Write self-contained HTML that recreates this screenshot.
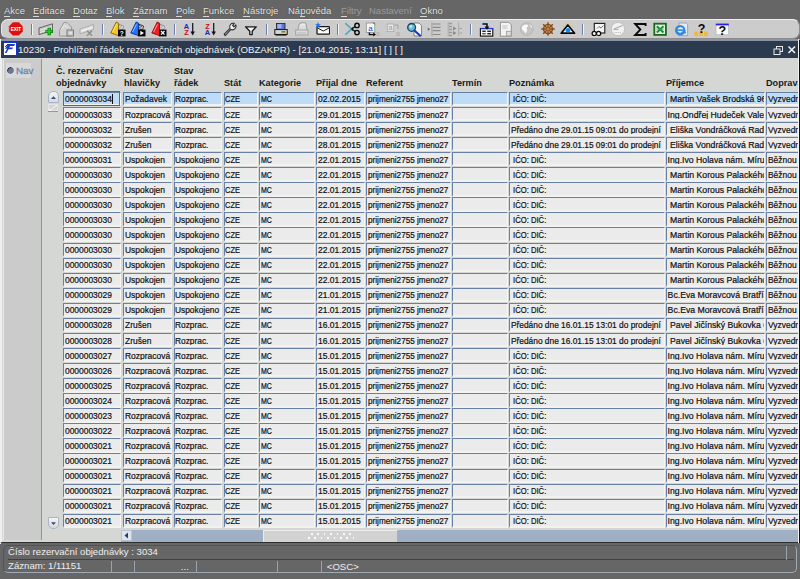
<!DOCTYPE html>
<html><head><meta charset="utf-8"><style>
*{margin:0;padding:0;box-sizing:border-box}
html,body{width:800px;height:579px;overflow:hidden}
body{position:relative;background:#666666;font-family:"Liberation Sans",sans-serif;color:#000}
#menu span{position:absolute;top:4.5px;font-size:9.5px;line-height:11px;color:#e6e6e6;white-space:nowrap;text-shadow:0 0 1px #333}
#menu span.dis{color:#9a9a9a;text-shadow:none}
#menu u{text-decoration:none;border-bottom:1px solid #d8d8d8}
#tb{position:absolute;left:1px;top:19px;width:799px;height:20px;background:#cccccc;border:1px solid #8c8c8c;border-top-color:#eeeeee;border-left-color:#e8e8e8;border-radius:7px}
#tbline{position:absolute;left:0;top:39px;width:800px;height:2px;background:#8a94a4}
.ic{position:absolute}
.sep{position:absolute;top:23.5px;width:2px;height:11px;background:#6a80aa;border-right:1px solid #f4f4f4}
#title{position:absolute;left:1.2px;top:41px;width:796.5px;height:17.5px;background:#2b3a4f}
#title .t{position:absolute;left:16.8px;top:3px;font-size:9.7px;line-height:11px;color:#f0f0f0;white-space:nowrap}
#ticon{position:absolute;left:2.5px;top:42px;width:14px;height:13.5px;background:#fff;border:1.2px solid #1830d0}
#win{position:absolute;left:0px;top:58px;width:800px;height:485px;background:#d5d7d5;border-right:1.2px solid #101010;border-bottom:1.5px solid #303030;border-left:2px solid #f0f0f0}
#nav{position:absolute;left:2.5px;top:59px;width:39.5px;height:481px;background:#cbcbcb;border-right:1px solid #8296b8;border-left:1px solid #e8e8e8}
#navbtn{position:absolute;left:5.5px;top:63px;width:25.5px;height:15px;background:#d8d8d8}
#navbtn .t{position:absolute;left:10.5px;top:2px;font-size:9.8px;line-height:11px;color:#6a84b0;-webkit-text-stroke:0.3px #6a84b0}
#navbtn .c{position:absolute;left:0px;top:2.5px;width:9.5px;height:9.5px;border-radius:50%;background:#6a7890;border:1.3px solid #f4f4f4;box-shadow:inset 1px 1px 0 #2a3448}
.h{position:absolute;font-size:9.9px;font-weight:bold;color:#1a1a1a;white-space:nowrap;line-height:11.85px;transform:scaleX(0.925);transform-origin:0 0}
.f{position:absolute;height:14.4px;background:#ebebeb;border-top:1.5px solid #6880a4;border-left:1.5px solid #6880a4;border-bottom:2.4px solid #f2f2f0;border-right:1px solid #f6f6f4;overflow:hidden;white-space:nowrap}
.f span{position:absolute;left:0.6px;top:0.65px;font-size:8.7px;color:#101010;line-height:12px;-webkit-text-stroke:0.2px #101010;transform:scaleX(0.83);transform-origin:0 0}
.f.sel{background:#bcdcf8}
#redbox{position:absolute;left:62.6px;top:91.1px;width:57.8px;height:15.4px;border:1.1px solid #e43030}
#caret{position:absolute;left:112.3px;top:94px;width:1px;height:10px;background:#111}
#sbar{position:absolute;left:121px;top:530px;width:676.5px;height:12px;background:#9fb0c4}
#sbtn{position:absolute;left:121px;top:530px;width:11px;height:11px;background:#dde4ec;border:1px solid #b8c4d4}
#sthumb{position:absolute;left:263px;top:530px;width:135px;height:11.5px;background:#d2d2d2;border-right:1px solid #a8aeb8;border-top:1px solid #ececec;border-left:1px solid #ececec}
.arr{position:absolute;left:47.5px;width:11px;height:11.5px;background:linear-gradient(#f4f4f4,#d8dade);border:1px solid #a8b4c8}
#status{position:absolute;left:2.8px;top:544.7px;width:794.5px;height:28.7px;border:1px solid #4c5464;border-right-color:#a0aab6;border-bottom-color:#a0aab6;border-radius:5px}
#status .t{position:absolute;font-size:9.6px;line-height:11px;color:#eeeeee;white-space:nowrap}
.vs{position:absolute;width:1px;background:#3c4450;border-left:1px solid #9aa2ae}
</style></head><body>
<div id="menu"><span class="" style="left:4px"><u>A</u>kce</span>
<span class="" style="left:33px"><u>E</u>ditace</span>
<span class="" style="left:73px"><u>D</u>otaz</span>
<span class="" style="left:106px"><u>B</u>lok</span>
<span class="" style="left:133px"><u>Z</u>áznam</span>
<span class="" style="left:176px"><u>P</u>ole</span>
<span class="" style="left:203px"><u>F</u>unkce</span>
<span class="" style="left:243px"><u>N</u>ástroje</span>
<span class="" style="left:288px">Ná<u>p</u>ověda</span>
<span class="dis" style="left:341px"><u>F</u>iltry</span>
<span class="dis" style="left:369px">Nastavení</span>
<span class="" style="left:420px"><u>O</u>kno</span></div>
<div id="tbline"></div><div style="position:absolute;left:0;top:38.5px;width:1.2px;height:505px;background:#f0f0f0"></div><div style="position:absolute;z-index:5;left:797.9px;top:39px;width:1px;height:504px;background:#f4f4f4"></div><div style="position:absolute;z-index:5;left:798.9px;top:40px;width:1.1px;height:503px;background:#101010"></div><div id="tb"></div>
<div class="sep" style="left:30.5px"></div>
<div class="sep" style="left:101.5px"></div>
<div class="sep" style="left:173.5px"></div>
<div class="sep" style="left:265.5px"></div>
<div class="sep" style="left:337.0px"></div>
<div class="sep" style="left:469.5px"></div>
<div class="sep" style="left:582.0px"></div>
<svg class="ic" style="left:8px;top:21px" width="16" height="16" viewBox="0 0 16 16"><polygon points="4.8,1 10.8,1 15,5.2 15,10.6 10.8,14.8 4.8,14.8 0.8,10.6 0.8,5.2" fill="#dc1010" stroke="#f0c8c8" stroke-width="0.5"/><text x="7.9" y="10" font-size="5" font-weight="bold" textLength="10.5" lengthAdjust="spacingAndGlyphs" fill="#fff" text-anchor="middle" font-family="Liberation Sans">EXIT</text></svg><svg class="ic" style="left:38px;top:21px" width="16" height="16" viewBox="0 0 16 16"><path d="M1,7 L14.5,2.8 L14.5,9.5 L1,13.6 Z" fill="#c4c4c4" stroke="#5a5a5a" stroke-width="0.9"/><path d="M2,9.2 L13.5,5.6 M2,11.5 L13.5,7.9" stroke="#f0f0f0" stroke-width="0.9"/><path d="M11.2,6.8 v7.4 M7.5,10.5 h7.4" stroke="#0a5a0a" stroke-width="3.2"/><path d="M11.2,7.3 v6.4 M8,10.5 h6.4" stroke="#18d018" stroke-width="2"/></svg><svg class="ic" style="left:58px;top:21px" width="16" height="16" viewBox="0 0 16 16"><path d="M1.5,9.5 L6,1.5 L9,1.5 L13.5,6 L13.5,15 L1.5,15 Z" fill="#d2d2d2" stroke="#9a9a9a" stroke-width="1"/><path d="M3.5,8 l3,-4 3,3" stroke="#eee" fill="none"/><rect x="9" y="9" width="6.5" height="6" fill="#c8c8c8" stroke="#7a7a7a" stroke-width="1"/><path d="M13.5,10.5 L10.5,12 L13.5,13.5 Z" fill="#f0f0f0"/></svg><svg class="ic" style="left:79px;top:21px" width="16" height="16" viewBox="0 0 16 16"><path d="M1,8 L14.5,3.6 L14.5,8.5 L1,12.8 Z" fill="#dedede" stroke="#a8a8a8" stroke-width="0.9"/><path d="M2,10.2 L13.5,6.5" stroke="#f6f6f6"/><path d="M8,9.8 l5,5 M13,9.8 l-5,5" stroke="#909090" stroke-width="1.5"/></svg><svg class="ic" style="left:109.5px;top:21px" width="16" height="16" viewBox="0 0 16 16"><path d="M7,2.5 L13.5,5 L12.5,9 L6,7 Z" fill="#e8e8e8" stroke="#8a8a8a" stroke-width="0.9"/><path d="M8,4 l4,1.6 M7.6,5.6 l4,1.6" stroke="#8a8a8a" stroke-width="0.7"/><polygon points="0.8,12 6.2,1 8.6,2.2 8.4,9 9,14.8" fill="#f4c818" stroke="#906010" stroke-width="0.9"/><path d="M2.6,11 L6.4,3.4" stroke="#fff" stroke-opacity="0.55" stroke-width="1"/><rect x="8" y="8.6" width="7.5" height="6.8" fill="#080808"/><text x="11.8" y="14.6" font-size="6.5" font-weight="bold" fill="#fff" text-anchor="middle" font-family="Liberation Sans">?</text></svg><svg class="ic" style="left:130px;top:21px" width="16" height="16" viewBox="0 0 16 16"><path d="M7,2.5 L13.5,5 L12.5,9 L6,7 Z" fill="#e8e8e8" stroke="#222" stroke-width="0.9"/><path d="M8,4 l4,1.6 M7.6,5.6 l4,1.6" stroke="#222" stroke-width="0.7"/><polygon points="0.8,12 6.2,1 8.6,2.2 8.4,9 9,14.8" fill="#1c78f8" stroke="#0830a0" stroke-width="0.9"/><path d="M2.6,11 L6.4,3.4" stroke="#fff" stroke-opacity="0.55" stroke-width="1"/><rect x="8" y="8.6" width="7.5" height="6.8" fill="#080808"/><path d="M10.3,9.8 L14,12 L10.3,14.2 Z" fill="#fff"/></svg><svg class="ic" style="left:150.8px;top:21px" width="16" height="16" viewBox="0 0 16 16"><path d="M7,2.5 L13.5,5 L12.5,9 L6,7 Z" fill="#e8e8e8" stroke="#8a8a8a" stroke-width="0.9"/><path d="M8,4 l4,1.6 M7.6,5.6 l4,1.6" stroke="#8a8a8a" stroke-width="0.7"/><polygon points="0.8,12 6.2,1 8.6,2.2 8.4,9 9,14.8" fill="#ee2020" stroke="#901010" stroke-width="0.9"/><path d="M2.6,11 L6.4,3.4" stroke="#fff" stroke-opacity="0.55" stroke-width="1"/><rect x="8" y="8.6" width="7.5" height="6.8" fill="#080808"/><path d="M10,10 l3.5,3.6 M13.5,10 l-3.5,3.6" stroke="#fff" stroke-width="1.3"/></svg><svg class="ic" style="left:182px;top:21px" width="16" height="16" viewBox="0 0 16 16"><text x="4.4" y="7.6" font-size="7.4" font-weight="bold" fill="#1a2ab8" text-anchor="middle" font-family="Liberation Sans">A</text><text x="4.4" y="13.9" font-size="7.4" font-weight="bold" fill="#c01010" text-anchor="middle" font-family="Liberation Sans">Z</text><path d="M10.7,2 v10" stroke="#111" stroke-width="1.2"/><path d="M8.5,10.5 L10.7,14.5 L12.9,10.5 Z" fill="#111"/></svg><svg class="ic" style="left:203px;top:21px" width="16" height="16" viewBox="0 0 16 16"><text x="4.4" y="7.6" font-size="7.4" font-weight="bold" fill="#c01010" text-anchor="middle" font-family="Liberation Sans">Z</text><text x="4.4" y="13.9" font-size="7.4" font-weight="bold" fill="#1a2ab8" text-anchor="middle" font-family="Liberation Sans">A</text><path d="M10.7,2 v10" stroke="#111" stroke-width="1.2"/><path d="M8.5,10.5 L10.7,14.5 L12.9,10.5 Z" fill="#111"/></svg><svg class="ic" style="left:222px;top:21px" width="16" height="16" viewBox="0 0 16 16"><path d="M2.2,13.2 L8,7.4 A3.6,3.6 0 0 1 12.3,2.4 L10.6,4.4 L11.9,5.8 L13.9,4 A3.6,3.6 0 0 1 8.9,8.4 L3.2,14.6 Z" fill="#f4f4f4" stroke="#2a2a2a" stroke-width="1.1" stroke-linejoin="round"/></svg><svg class="ic" style="left:243px;top:21px" width="16" height="16" viewBox="0 0 16 16"><path d="M2.5,5.8 L13.3,5.8 L9.2,10.2 L9.2,13.6 L6.8,13.6 L6.8,10.2 Z" fill="#f6f6f6" stroke="#181818" stroke-width="1.3" stroke-linejoin="round"/></svg><svg class="ic" style="left:273px;top:21px" width="16" height="16" viewBox="0 0 16 16"><rect x="3.5" y="2.4" width="8.5" height="6.5" fill="#5a78d0" stroke="#202020" stroke-width="0.8"/><rect x="4.5" y="3.2" width="4" height="4" fill="#a8b8f0"/><rect x="1.8" y="8.6" width="12.4" height="4.8" fill="#d8d8d8" stroke="#181818" stroke-width="1"/><rect x="2.5" y="13" width="11" height="1.6" fill="#181818"/><rect x="8.4" y="10" width="1.6" height="1.6" fill="#20c020"/><rect x="10.2" y="10" width="1.6" height="1.6" fill="#e02020"/><rect x="12" y="10" width="1.4" height="1.6" fill="#e0c020"/></svg><svg class="ic" style="left:294px;top:21px" width="16" height="16" viewBox="0 0 16 16"><path d="M4,9 L5,3 Q8,0.5 12,2 L13,9" fill="#dcdcdc" stroke="#a0a0a0" stroke-width="1"/><path d="M6,5 q2,-2 5,-1" stroke="#f4f4f4" fill="none"/><rect x="1.6" y="9" width="12.4" height="5" fill="#dadada" stroke="#a4a4a4" stroke-width="1"/><path d="M3,12 h9" stroke="#b8b8b8"/></svg><svg class="ic" style="left:314px;top:21px" width="16" height="16" viewBox="0 0 16 16"><rect x="3" y="5.6" width="12.6" height="7.6" rx="0.8" fill="#fafafa" stroke="#1a1a1a" stroke-width="1.3"/><path d="M3.5,7 L9.3,10 L15,7" fill="none" stroke="#1a1a1a" stroke-width="1"/><path d="M4,1 L4.8,3.2 L7,3.2 L5.2,4.6 L5.9,6.8 L4,5.4 L2.1,6.8 L2.8,4.6 L1,3.2 L3.2,3.2 Z" fill="#1070f0"/></svg><svg class="ic" style="left:344px;top:21px" width="16" height="16" viewBox="0 0 16 16"><path d="M1.3,2.2 L9.5,9.8" stroke="#60a8c0" stroke-width="1.8"/><path d="M1.3,13.8 L9.5,6.2" stroke="#60a8c0" stroke-width="1.8"/><circle cx="13" cy="4.4" r="2.2" fill="none" stroke="#0a0a0a" stroke-width="1.4"/><circle cx="13" cy="11.6" r="2.2" fill="none" stroke="#0a0a0a" stroke-width="1.4"/><path d="M7.5,8 L11.3,5.5 M7.5,8 L11.3,10.5" stroke="#0a0a0a" stroke-width="1.4"/></svg><svg class="ic" style="left:365px;top:21px" width="16" height="16" viewBox="0 0 16 16"><rect x="1.3" y="2" width="8.5" height="9.6" fill="#f6f6f6" stroke="#909090" stroke-width="0.8"/><path d="M8,1.5 l1.8,1.8" stroke="#333" stroke-width="0.8"/><text x="5.4" y="9.6" font-size="8" fill="#1840f0" text-anchor="middle" font-family="Liberation Sans">a</text><path d="M4.4,11.4 v2.2 h4" stroke="#0a0a0a" stroke-width="1.4" fill="none"/><path d="M8.2,11.6 L11,13.6 L8.2,15.6 Z" fill="#0a0a0a"/><text x="13" y="14.6" font-size="6.8" fill="#a8a8a8" text-anchor="middle" font-family="Liberation Sans">a</text></svg><svg class="ic" style="left:386px;top:21px" width="16" height="16" viewBox="0 0 16 16"><rect x="1.3" y="3" width="6.5" height="7.6" fill="#e6e6e6" stroke="#a8a8a8" stroke-width="0.8"/><text x="4.5" y="9.4" font-size="7" fill="#9a9a9a" text-anchor="middle" font-family="Liberation Sans">a</text><path d="M8.4,4 h3.6 v4" stroke="#a0a0a0" stroke-width="1" fill="none"/><text x="11.8" y="15" font-size="7.5" fill="#a8a8a8" text-anchor="middle" font-family="Liberation Sans">a</text></svg><svg class="ic" style="left:406px;top:21px" width="16" height="16" viewBox="0 0 16 16"><path d="M8,2 h5 l2.5,2.5 v10.5 h-7.5 z" fill="#f4f4f4" stroke="#6a6a6a" stroke-width="0.8"/><circle cx="5.6" cy="6.4" r="3.9" fill="#68c0c8" stroke="#18406a" stroke-width="1.3"/><circle cx="4.8" cy="5.6" r="1.4" fill="#c8f0f0"/><path d="M8.4,9.4 L14,14.6" stroke="#1038c8" stroke-width="2.1" stroke-linecap="round"/></svg><svg class="ic" style="left:426px;top:21px" width="16" height="16" viewBox="0 0 16 16"><path d="M1.7,6.6 L4.3,8.2 L1.7,9.8 Z" fill="#707070"/><path d="M6,1.2 v14" stroke="#9a9a9a" stroke-width="1"/><path d="M7,3 h7.5 M7,6.3 h7.5 M7,9.7 h7.5 M7,13.5 h7.5" stroke="#8a8a8a" stroke-width="1.2"/></svg><svg class="ic" style="left:447px;top:21px" width="16" height="16" viewBox="0 0 16 16"><path d="M1.2,1.2 v14 M11.7,1.2 v14" stroke="#a8a8a8" stroke-width="1"/><path d="M2,2.5 h3 M2,5.5 h3 M2,8.5 h3 M2,11.5 h3 M2,14.5 h3" stroke="#9a9a9a" stroke-width="1.3"/><path d="M6,5.5 L9.5,7.5 L6,9.5 Z M6,10 L9.5,12 L6,14 Z" fill="#8a8a8a"/><path d="M12.5,7.5 h2.5 M12.5,12 h2.5" stroke="#a0a0a0"/></svg><svg class="ic" style="left:478px;top:21px" width="16" height="16" viewBox="0 0 16 16"><path d="M2,1 h10" stroke="#a8d0f0" stroke-width="1"/><rect x="2.4" y="7.5" width="12.4" height="7.6" fill="#f4f4f4" stroke="#0a0a0a" stroke-width="1.1"/><path d="M2.4,7.6 h12.4" stroke="#1a3ad8" stroke-width="1.2"/><rect x="4.3" y="9.6" width="3.4" height="1.4" fill="#222"/><rect x="9.3" y="9.6" width="3.6" height="1.4" fill="#222"/><rect x="4.3" y="12" width="3.4" height="1.4" fill="#555"/><rect x="9.3" y="12" width="3.6" height="1.4" fill="#222"/><path d="M4.5,3 h4.5 v3.5" stroke="#0a0a0a" stroke-width="1.5" fill="none"/><path d="M6.6,5.4 L9,8.8 L11.4,5.4 Z" fill="#0a0a0a"/></svg><svg class="ic" style="left:498px;top:21px" width="16" height="16" viewBox="0 0 16 16"><path d="M2.4,1.3 h8.4 l2.5,2.5 v11.4 h-10.9 z" fill="#f2f2f2" stroke="#8a8a8a" stroke-width="0.9"/><path d="M4.4,5 h5 M4.4,7 h5" stroke="#c0c0c0"/><rect x="8.5" y="10.3" width="4.6" height="4.6" fill="#dedede" stroke="#9a9a9a" stroke-width="0.8"/></svg><svg class="ic" style="left:519px;top:21px" width="16" height="16" viewBox="0 0 16 16"><circle cx="7.8" cy="8" r="6.4" fill="#c4c4c4" stroke="#a8a8a8" stroke-width="0.6"/><path d="M3,5.5 q2.5,-2.8 6,-1.5 q0.8,1.8 -1.5,2.5 q1.5,3 -1,6 q-1,-2.5 -3,-3.5 q-1.2,-1.5 -0.5,-3.5z M10.5,3.2 q2.5,1 3,3.5 q-1.6,0.2 -2.2,-1.6z" fill="#f8f8f8"/></svg><svg class="ic" style="left:539.5px;top:21px" width="16" height="16" viewBox="0 0 16 16"><circle cx="8" cy="8" r="4.4" fill="none" stroke="#8a4a10" stroke-width="1.5"/><path d="M8,1.2 v13.6 M1.2,8 h13.6 M3.2,3.2 l9.6,9.6 M12.8,3.2 l-9.6,9.6" stroke="#8a4a10" stroke-width="1.4"/><circle cx="8" cy="8" r="1.6" fill="#d08040"/></svg><svg class="ic" style="left:560px;top:21px" width="16" height="16" viewBox="0 0 16 16"><path d="M1.2,12.2 L7.8,4 L14.6,12.2 Z" fill="#f2f2f2" stroke="#0a0a0a" stroke-width="1.7" stroke-linejoin="round"/><circle cx="8" cy="9.2" r="2.3" fill="#1088f8"/><path d="M2.2,4.5 l2,1.2 M13.4,4.5 l-2,1.2 M5,2.4 l1,1.2 M10.6,2.4 l-1,1.2 M7.9,1.4 v1.4" stroke="#e8c818" stroke-width="1"/></svg><svg class="ic" style="left:591px;top:21px" width="16" height="16" viewBox="0 0 16 16"><rect x="3.3" y="2.4" width="10.5" height="9.6" fill="#f4f4f4" stroke="#1a1a1a" stroke-width="1.1"/><path d="M6,7.5 l2,-2 l2,1.5 l2.5,-2.5" stroke="#555" fill="none" stroke-width="0.8"/><circle cx="3.2" cy="12.4" r="2.1" fill="#f4f4f4" stroke="#0a0a0a" stroke-width="1.2"/><circle cx="7.6" cy="12.4" r="2.1" fill="#f4f4f4" stroke="#0a0a0a" stroke-width="1.2"/></svg><svg class="ic" style="left:610px;top:21px" width="16" height="16" viewBox="0 0 16 16"><circle cx="8" cy="8" r="6.6" fill="#f2f2f2" stroke="#c0c0c0" stroke-width="0.9"/><path d="M4,8 L12.5,4.5" stroke="#a8a8a8" stroke-width="1.1"/><path d="M3.5,8.5 h5" stroke="#b0b0b0" stroke-width="1"/><path d="M4.5,11.5 h7" stroke="#b8b8b8" stroke-width="1" stroke-dasharray="1,0.8"/></svg><svg class="ic" style="left:632px;top:21px" width="16" height="16" viewBox="0 0 16 16"><path d="M13.6,5 L13.6,3 L3.2,3 L8.3,8.6 L3.2,14 L13.6,14 L13.6,12" fill="none" stroke="#0a0a0a" stroke-width="1.9"/></svg><svg class="ic" style="left:652px;top:21px" width="16" height="16" viewBox="0 0 16 16"><rect x="2.3" y="2.7" width="11.6" height="11.2" fill="#e0efe0" stroke="#1a6a1a" stroke-width="1.8"/><path d="M4.8,5.2 L11.5,11.5 M11.5,5.2 L4.8,11.5" stroke="#1a8a3a" stroke-width="1.9"/><path d="M4,8.3 h8" stroke="#60a860" stroke-width="0.6"/></svg><svg class="ic" style="left:673px;top:21px" width="16" height="16" viewBox="0 0 16 16"><path d="M6,2 h7 l1.6,1.6 v11 h-8.6 z" fill="#e4eaf4" stroke="#8a98b8" stroke-width="0.8"/><circle cx="7.2" cy="9.2" r="5.2" fill="#3088e0"/><circle cx="7.4" cy="9" r="2.8" fill="#e8f2fa"/><rect x="4.4" y="8.3" width="6" height="1.6" fill="#3088e0"/><path d="M8.5,10.5 h4.4 v2 h-4.4z" fill="#3088e0"/></svg><svg class="ic" style="left:693px;top:21px" width="16" height="16" viewBox="0 0 16 16"><rect x="1.3" y="10.6" width="3.8" height="4.6" fill="#f0b840"/><rect x="6.2" y="10.6" width="3.8" height="4.6" fill="#f0b840"/><rect x="11.1" y="10.6" width="3.8" height="4.6" fill="#f0b840"/><text x="8.6" y="11.8" font-size="12.5" font-weight="bold" fill="#080808" text-anchor="middle" font-family="Liberation Sans">?</text></svg><svg class="ic" style="left:714px;top:21px" width="16" height="16" viewBox="0 0 16 16"><rect x="2" y="3.2" width="12.6" height="10.6" fill="#fafafa" stroke="#aaa" stroke-width="0.6"/><rect x="1.8" y="2.6" width="13" height="1.8" fill="#2a20e8"/><text x="8.2" y="14.2" font-size="12.5" font-weight="bold" fill="#080808" text-anchor="middle" font-family="Liberation Sans">?</text></svg>
<div id="title"><div class="t">10230 - Prohlížení řádek rezervačních objednávek (OBZAKPR) - [21.04.2015; 13:11] [ ] [ ]</div>
<svg style="position:absolute;left:771.5px;top:4px" width="24" height="11" viewBox="0 0 24 11"><rect x="3.5" y="1.5" width="6" height="5" fill="none" stroke="#e8e8e8" stroke-width="1"/><rect x="1" y="4" width="6" height="5.5" fill="#2b3a4f" stroke="#e8e8e8" stroke-width="1"/><path d="M15.5,1.5 L22,8 M22,1.5 L15.5,8" stroke="#f0f0f0" stroke-width="1.6"/></svg>
</div>
<div id="ticon"><svg width="12" height="11" viewBox="0 0 12 11" style="position:absolute;left:0;top:0"><path d="M1,6 L4,1 L11,1 L10,3 L6,3 L5.3,4.5 L9,4.5 L8.2,6.2 L4.5,6.2 L2.5,10 L0.8,10 L3.2,5.5 Z" fill="#1838c8"/><path d="M1,4 l3,-3" stroke="#1838c8" stroke-width="1"/></svg></div>
<div id="win"></div>
<div id="nav"></div>
<div id="navbtn"><div class="c"></div><div class="t">Nav</div></div>
<div class="h" style="left:56px;top:64.9px">Č. rezervační<br>objednávky</div>
<div class="h" style="left:123.5px;top:64.9px">Stav<br>hlavičky</div>
<div class="h" style="left:173.5px;top:64.9px">Stav<br>řádek</div>
<div class="h" style="left:223.5px;top:76.75px">Stát</div>
<div class="h" style="left:259px;top:76.75px">Kategorie</div>
<div class="h" style="left:316px;top:76.75px">Přijal dne</div>
<div class="h" style="left:366px;top:76.75px">Referent</div>
<div class="h" style="left:452px;top:76.75px">Termín</div>
<div class="h" style="left:509px;top:76.75px">Poznámka</div>
<div class="h" style="left:666px;top:76.75px">Příjemce</div>
<div class="h" style="left:766px;top:76.75px">Doprava</div>
<div class="f sel" style="left:63px;top:91.80px;width:57.5px"><span style="transform:scaleX(0.97)">0000003034</span></div>
<div class="f sel" style="left:123px;top:91.80px;width:49.0px"><span style="transform:scaleX(0.975)">Požadavek</span></div>
<div class="f sel" style="left:173.5px;top:91.80px;width:48.5px"><span style="transform:scaleX(0.96)">Rozprac.</span></div>
<div class="f sel" style="left:223.5px;top:91.80px;width:34.0px"><span style="transform:scaleX(0.86)">CZE</span></div>
<div class="f sel" style="left:259px;top:91.80px;width:56.0px"><span style="transform:scaleX(0.81)">MC</span></div>
<div class="f sel" style="left:316px;top:91.80px;width:48.5px"><span style="transform:scaleX(0.98)">02.02.2015</span></div>
<div class="f sel" style="left:366px;top:91.80px;width:84.5px"><span style="transform:scaleX(0.94)">prijmeni2755 jmeno27</span></div>
<div class="f sel" style="left:452px;top:91.80px;width:55.5px"><span style="transform:scaleX(0.97)"></span></div>
<div class="f sel" style="left:509px;top:91.80px;width:155.5px"><span style="transform:scaleX(0.88)">&nbsp;IČO: DIČ:</span></div>
<div class="f sel" style="left:666px;top:91.80px;width:98.5px"><span style="transform:scaleX(1.0)">&nbsp;Martin Vašek Brodská 96</span></div>
<div class="f sel" style="left:766px;top:91.80px;width:35.0px"><span style="transform:scaleX(0.97)">Vyzvednutí</span></div>
<div class="f" style="left:63px;top:106.87px;width:57.5px"><span style="transform:scaleX(0.97)">0000003033</span></div>
<div class="f" style="left:123px;top:106.87px;width:49.0px"><span style="transform:scaleX(0.975)">Rozpracová</span></div>
<div class="f" style="left:173.5px;top:106.87px;width:48.5px"><span style="transform:scaleX(0.96)">Rozprac.</span></div>
<div class="f" style="left:223.5px;top:106.87px;width:34.0px"><span style="transform:scaleX(0.86)">CZE</span></div>
<div class="f" style="left:259px;top:106.87px;width:56.0px"><span style="transform:scaleX(0.81)">MC</span></div>
<div class="f" style="left:316px;top:106.87px;width:48.5px"><span style="transform:scaleX(0.98)">29.01.2015</span></div>
<div class="f" style="left:366px;top:106.87px;width:84.5px"><span style="transform:scaleX(0.94)">prijmeni2755 jmeno27</span></div>
<div class="f" style="left:452px;top:106.87px;width:55.5px"><span style="transform:scaleX(0.97)"></span></div>
<div class="f" style="left:509px;top:106.87px;width:155.5px"><span style="transform:scaleX(0.88)">&nbsp;IČO: DIČ:</span></div>
<div class="f" style="left:666px;top:106.87px;width:98.5px"><span style="transform:scaleX(1.0)">Ing.Ondřej Hudeček Valeriánova</span></div>
<div class="f" style="left:766px;top:106.87px;width:35.0px"><span style="transform:scaleX(0.97)">Vyzvednutí</span></div>
<div class="f" style="left:63px;top:121.94px;width:57.5px"><span style="transform:scaleX(0.97)">0000003032</span></div>
<div class="f" style="left:123px;top:121.94px;width:49.0px"><span style="transform:scaleX(0.975)">Zrušen</span></div>
<div class="f" style="left:173.5px;top:121.94px;width:48.5px"><span style="transform:scaleX(0.96)">Rozprac.</span></div>
<div class="f" style="left:223.5px;top:121.94px;width:34.0px"><span style="transform:scaleX(0.86)">CZE</span></div>
<div class="f" style="left:259px;top:121.94px;width:56.0px"><span style="transform:scaleX(0.81)">MC</span></div>
<div class="f" style="left:316px;top:121.94px;width:48.5px"><span style="transform:scaleX(0.98)">28.01.2015</span></div>
<div class="f" style="left:366px;top:121.94px;width:84.5px"><span style="transform:scaleX(0.94)">prijmeni2755 jmeno27</span></div>
<div class="f" style="left:452px;top:121.94px;width:55.5px"><span style="transform:scaleX(0.97)"></span></div>
<div class="f" style="left:509px;top:121.94px;width:155.5px"><span style="transform:scaleX(0.96)">Předáno dne 29.01.15 09:01 do prodejní</span></div>
<div class="f" style="left:666px;top:121.94px;width:98.5px"><span style="transform:scaleX(1.0)">&nbsp;Eliška Vondráčková Radlická</span></div>
<div class="f" style="left:766px;top:121.94px;width:35.0px"><span style="transform:scaleX(0.97)">Vyzvednutí</span></div>
<div class="f" style="left:63px;top:137.01px;width:57.5px"><span style="transform:scaleX(0.97)">0000003032</span></div>
<div class="f" style="left:123px;top:137.01px;width:49.0px"><span style="transform:scaleX(0.975)">Zrušen</span></div>
<div class="f" style="left:173.5px;top:137.01px;width:48.5px"><span style="transform:scaleX(0.96)">Rozprac.</span></div>
<div class="f" style="left:223.5px;top:137.01px;width:34.0px"><span style="transform:scaleX(0.86)">CZE</span></div>
<div class="f" style="left:259px;top:137.01px;width:56.0px"><span style="transform:scaleX(0.81)">MC</span></div>
<div class="f" style="left:316px;top:137.01px;width:48.5px"><span style="transform:scaleX(0.98)">28.01.2015</span></div>
<div class="f" style="left:366px;top:137.01px;width:84.5px"><span style="transform:scaleX(0.94)">prijmeni2755 jmeno27</span></div>
<div class="f" style="left:452px;top:137.01px;width:55.5px"><span style="transform:scaleX(0.97)"></span></div>
<div class="f" style="left:509px;top:137.01px;width:155.5px"><span style="transform:scaleX(0.96)">Předáno dne 29.01.15 09:01 do prodejní</span></div>
<div class="f" style="left:666px;top:137.01px;width:98.5px"><span style="transform:scaleX(1.0)">&nbsp;Eliška Vondráčková Radlická</span></div>
<div class="f" style="left:766px;top:137.01px;width:35.0px"><span style="transform:scaleX(0.97)">Vyzvednutí</span></div>
<div class="f" style="left:63px;top:152.08px;width:57.5px"><span style="transform:scaleX(0.97)">0000003031</span></div>
<div class="f" style="left:123px;top:152.08px;width:49.0px"><span style="transform:scaleX(0.975)">Uspokojen</span></div>
<div class="f" style="left:173.5px;top:152.08px;width:48.5px"><span style="transform:scaleX(0.96)">Uspokojeno</span></div>
<div class="f" style="left:223.5px;top:152.08px;width:34.0px"><span style="transform:scaleX(0.86)">CZE</span></div>
<div class="f" style="left:259px;top:152.08px;width:56.0px"><span style="transform:scaleX(0.81)">MC</span></div>
<div class="f" style="left:316px;top:152.08px;width:48.5px"><span style="transform:scaleX(0.98)">22.01.2015</span></div>
<div class="f" style="left:366px;top:152.08px;width:84.5px"><span style="transform:scaleX(0.94)">prijmeni2755 jmeno27</span></div>
<div class="f" style="left:452px;top:152.08px;width:55.5px"><span style="transform:scaleX(0.97)"></span></div>
<div class="f" style="left:509px;top:152.08px;width:155.5px"><span style="transform:scaleX(0.88)">&nbsp;IČO: DIČ:</span></div>
<div class="f" style="left:666px;top:152.08px;width:98.5px"><span style="transform:scaleX(1.0)">Ing.Ivo Holava nám. Míru 1</span></div>
<div class="f" style="left:766px;top:152.08px;width:35.0px"><span style="transform:scaleX(0.97)">Běžnou</span></div>
<div class="f" style="left:63px;top:167.15px;width:57.5px"><span style="transform:scaleX(0.97)">0000003030</span></div>
<div class="f" style="left:123px;top:167.15px;width:49.0px"><span style="transform:scaleX(0.975)">Uspokojen</span></div>
<div class="f" style="left:173.5px;top:167.15px;width:48.5px"><span style="transform:scaleX(0.96)">Uspokojeno</span></div>
<div class="f" style="left:223.5px;top:167.15px;width:34.0px"><span style="transform:scaleX(0.86)">CZE</span></div>
<div class="f" style="left:259px;top:167.15px;width:56.0px"><span style="transform:scaleX(0.81)">MC</span></div>
<div class="f" style="left:316px;top:167.15px;width:48.5px"><span style="transform:scaleX(0.98)">22.01.2015</span></div>
<div class="f" style="left:366px;top:167.15px;width:84.5px"><span style="transform:scaleX(0.94)">prijmeni2755 jmeno27</span></div>
<div class="f" style="left:452px;top:167.15px;width:55.5px"><span style="transform:scaleX(0.97)"></span></div>
<div class="f" style="left:509px;top:167.15px;width:155.5px"><span style="transform:scaleX(0.88)">&nbsp;IČO: DIČ:</span></div>
<div class="f" style="left:666px;top:167.15px;width:98.5px"><span style="transform:scaleX(1.0)">&nbsp;Martin Korous Palackého 1</span></div>
<div class="f" style="left:766px;top:167.15px;width:35.0px"><span style="transform:scaleX(0.97)">Běžnou</span></div>
<div class="f" style="left:63px;top:182.22px;width:57.5px"><span style="transform:scaleX(0.97)">0000003030</span></div>
<div class="f" style="left:123px;top:182.22px;width:49.0px"><span style="transform:scaleX(0.975)">Uspokojen</span></div>
<div class="f" style="left:173.5px;top:182.22px;width:48.5px"><span style="transform:scaleX(0.96)">Uspokojeno</span></div>
<div class="f" style="left:223.5px;top:182.22px;width:34.0px"><span style="transform:scaleX(0.86)">CZE</span></div>
<div class="f" style="left:259px;top:182.22px;width:56.0px"><span style="transform:scaleX(0.81)">MC</span></div>
<div class="f" style="left:316px;top:182.22px;width:48.5px"><span style="transform:scaleX(0.98)">22.01.2015</span></div>
<div class="f" style="left:366px;top:182.22px;width:84.5px"><span style="transform:scaleX(0.94)">prijmeni2755 jmeno27</span></div>
<div class="f" style="left:452px;top:182.22px;width:55.5px"><span style="transform:scaleX(0.97)"></span></div>
<div class="f" style="left:509px;top:182.22px;width:155.5px"><span style="transform:scaleX(0.88)">&nbsp;IČO: DIČ:</span></div>
<div class="f" style="left:666px;top:182.22px;width:98.5px"><span style="transform:scaleX(1.0)">&nbsp;Martin Korous Palackého 1</span></div>
<div class="f" style="left:766px;top:182.22px;width:35.0px"><span style="transform:scaleX(0.97)">Běžnou</span></div>
<div class="f" style="left:63px;top:197.29px;width:57.5px"><span style="transform:scaleX(0.97)">0000003030</span></div>
<div class="f" style="left:123px;top:197.29px;width:49.0px"><span style="transform:scaleX(0.975)">Uspokojen</span></div>
<div class="f" style="left:173.5px;top:197.29px;width:48.5px"><span style="transform:scaleX(0.96)">Uspokojeno</span></div>
<div class="f" style="left:223.5px;top:197.29px;width:34.0px"><span style="transform:scaleX(0.86)">CZE</span></div>
<div class="f" style="left:259px;top:197.29px;width:56.0px"><span style="transform:scaleX(0.81)">MC</span></div>
<div class="f" style="left:316px;top:197.29px;width:48.5px"><span style="transform:scaleX(0.98)">22.01.2015</span></div>
<div class="f" style="left:366px;top:197.29px;width:84.5px"><span style="transform:scaleX(0.94)">prijmeni2755 jmeno27</span></div>
<div class="f" style="left:452px;top:197.29px;width:55.5px"><span style="transform:scaleX(0.97)"></span></div>
<div class="f" style="left:509px;top:197.29px;width:155.5px"><span style="transform:scaleX(0.88)">&nbsp;IČO: DIČ:</span></div>
<div class="f" style="left:666px;top:197.29px;width:98.5px"><span style="transform:scaleX(1.0)">&nbsp;Martin Korous Palackého 1</span></div>
<div class="f" style="left:766px;top:197.29px;width:35.0px"><span style="transform:scaleX(0.97)">Běžnou</span></div>
<div class="f" style="left:63px;top:212.36px;width:57.5px"><span style="transform:scaleX(0.97)">0000003030</span></div>
<div class="f" style="left:123px;top:212.36px;width:49.0px"><span style="transform:scaleX(0.975)">Uspokojen</span></div>
<div class="f" style="left:173.5px;top:212.36px;width:48.5px"><span style="transform:scaleX(0.96)">Uspokojeno</span></div>
<div class="f" style="left:223.5px;top:212.36px;width:34.0px"><span style="transform:scaleX(0.86)">CZE</span></div>
<div class="f" style="left:259px;top:212.36px;width:56.0px"><span style="transform:scaleX(0.81)">MC</span></div>
<div class="f" style="left:316px;top:212.36px;width:48.5px"><span style="transform:scaleX(0.98)">22.01.2015</span></div>
<div class="f" style="left:366px;top:212.36px;width:84.5px"><span style="transform:scaleX(0.94)">prijmeni2755 jmeno27</span></div>
<div class="f" style="left:452px;top:212.36px;width:55.5px"><span style="transform:scaleX(0.97)"></span></div>
<div class="f" style="left:509px;top:212.36px;width:155.5px"><span style="transform:scaleX(0.88)">&nbsp;IČO: DIČ:</span></div>
<div class="f" style="left:666px;top:212.36px;width:98.5px"><span style="transform:scaleX(1.0)">&nbsp;Martin Korous Palackého 1</span></div>
<div class="f" style="left:766px;top:212.36px;width:35.0px"><span style="transform:scaleX(0.97)">Běžnou</span></div>
<div class="f" style="left:63px;top:227.43px;width:57.5px"><span style="transform:scaleX(0.97)">0000003030</span></div>
<div class="f" style="left:123px;top:227.43px;width:49.0px"><span style="transform:scaleX(0.975)">Uspokojen</span></div>
<div class="f" style="left:173.5px;top:227.43px;width:48.5px"><span style="transform:scaleX(0.96)">Uspokojeno</span></div>
<div class="f" style="left:223.5px;top:227.43px;width:34.0px"><span style="transform:scaleX(0.86)">CZE</span></div>
<div class="f" style="left:259px;top:227.43px;width:56.0px"><span style="transform:scaleX(0.81)">MC</span></div>
<div class="f" style="left:316px;top:227.43px;width:48.5px"><span style="transform:scaleX(0.98)">22.01.2015</span></div>
<div class="f" style="left:366px;top:227.43px;width:84.5px"><span style="transform:scaleX(0.94)">prijmeni2755 jmeno27</span></div>
<div class="f" style="left:452px;top:227.43px;width:55.5px"><span style="transform:scaleX(0.97)"></span></div>
<div class="f" style="left:509px;top:227.43px;width:155.5px"><span style="transform:scaleX(0.88)">&nbsp;IČO: DIČ:</span></div>
<div class="f" style="left:666px;top:227.43px;width:98.5px"><span style="transform:scaleX(1.0)">&nbsp;Martin Korous Palackého 1</span></div>
<div class="f" style="left:766px;top:227.43px;width:35.0px"><span style="transform:scaleX(0.97)">Běžnou</span></div>
<div class="f" style="left:63px;top:242.50px;width:57.5px"><span style="transform:scaleX(0.97)">0000003030</span></div>
<div class="f" style="left:123px;top:242.50px;width:49.0px"><span style="transform:scaleX(0.975)">Uspokojen</span></div>
<div class="f" style="left:173.5px;top:242.50px;width:48.5px"><span style="transform:scaleX(0.96)">Uspokojeno</span></div>
<div class="f" style="left:223.5px;top:242.50px;width:34.0px"><span style="transform:scaleX(0.86)">CZE</span></div>
<div class="f" style="left:259px;top:242.50px;width:56.0px"><span style="transform:scaleX(0.81)">MC</span></div>
<div class="f" style="left:316px;top:242.50px;width:48.5px"><span style="transform:scaleX(0.98)">22.01.2015</span></div>
<div class="f" style="left:366px;top:242.50px;width:84.5px"><span style="transform:scaleX(0.94)">prijmeni2755 jmeno27</span></div>
<div class="f" style="left:452px;top:242.50px;width:55.5px"><span style="transform:scaleX(0.97)"></span></div>
<div class="f" style="left:509px;top:242.50px;width:155.5px"><span style="transform:scaleX(0.88)">&nbsp;IČO: DIČ:</span></div>
<div class="f" style="left:666px;top:242.50px;width:98.5px"><span style="transform:scaleX(1.0)">&nbsp;Martin Korous Palackého 1</span></div>
<div class="f" style="left:766px;top:242.50px;width:35.0px"><span style="transform:scaleX(0.97)">Běžnou</span></div>
<div class="f" style="left:63px;top:257.57px;width:57.5px"><span style="transform:scaleX(0.97)">0000003030</span></div>
<div class="f" style="left:123px;top:257.57px;width:49.0px"><span style="transform:scaleX(0.975)">Uspokojen</span></div>
<div class="f" style="left:173.5px;top:257.57px;width:48.5px"><span style="transform:scaleX(0.96)">Uspokojeno</span></div>
<div class="f" style="left:223.5px;top:257.57px;width:34.0px"><span style="transform:scaleX(0.86)">CZE</span></div>
<div class="f" style="left:259px;top:257.57px;width:56.0px"><span style="transform:scaleX(0.81)">MC</span></div>
<div class="f" style="left:316px;top:257.57px;width:48.5px"><span style="transform:scaleX(0.98)">22.01.2015</span></div>
<div class="f" style="left:366px;top:257.57px;width:84.5px"><span style="transform:scaleX(0.94)">prijmeni2755 jmeno27</span></div>
<div class="f" style="left:452px;top:257.57px;width:55.5px"><span style="transform:scaleX(0.97)"></span></div>
<div class="f" style="left:509px;top:257.57px;width:155.5px"><span style="transform:scaleX(0.88)">&nbsp;IČO: DIČ:</span></div>
<div class="f" style="left:666px;top:257.57px;width:98.5px"><span style="transform:scaleX(1.0)">&nbsp;Martin Korous Palackého 1</span></div>
<div class="f" style="left:766px;top:257.57px;width:35.0px"><span style="transform:scaleX(0.97)">Běžnou</span></div>
<div class="f" style="left:63px;top:272.64px;width:57.5px"><span style="transform:scaleX(0.97)">0000003030</span></div>
<div class="f" style="left:123px;top:272.64px;width:49.0px"><span style="transform:scaleX(0.975)">Uspokojen</span></div>
<div class="f" style="left:173.5px;top:272.64px;width:48.5px"><span style="transform:scaleX(0.96)">Uspokojeno</span></div>
<div class="f" style="left:223.5px;top:272.64px;width:34.0px"><span style="transform:scaleX(0.86)">CZE</span></div>
<div class="f" style="left:259px;top:272.64px;width:56.0px"><span style="transform:scaleX(0.81)">MC</span></div>
<div class="f" style="left:316px;top:272.64px;width:48.5px"><span style="transform:scaleX(0.98)">22.01.2015</span></div>
<div class="f" style="left:366px;top:272.64px;width:84.5px"><span style="transform:scaleX(0.94)">prijmeni2755 jmeno27</span></div>
<div class="f" style="left:452px;top:272.64px;width:55.5px"><span style="transform:scaleX(0.97)"></span></div>
<div class="f" style="left:509px;top:272.64px;width:155.5px"><span style="transform:scaleX(0.88)">&nbsp;IČO: DIČ:</span></div>
<div class="f" style="left:666px;top:272.64px;width:98.5px"><span style="transform:scaleX(1.0)">&nbsp;Martin Korous Palackého 1</span></div>
<div class="f" style="left:766px;top:272.64px;width:35.0px"><span style="transform:scaleX(0.97)">Běžnou</span></div>
<div class="f" style="left:63px;top:287.71px;width:57.5px"><span style="transform:scaleX(0.97)">0000003029</span></div>
<div class="f" style="left:123px;top:287.71px;width:49.0px"><span style="transform:scaleX(0.975)">Uspokojen</span></div>
<div class="f" style="left:173.5px;top:287.71px;width:48.5px"><span style="transform:scaleX(0.96)">Uspokojeno</span></div>
<div class="f" style="left:223.5px;top:287.71px;width:34.0px"><span style="transform:scaleX(0.86)">CZE</span></div>
<div class="f" style="left:259px;top:287.71px;width:56.0px"><span style="transform:scaleX(0.81)">MC</span></div>
<div class="f" style="left:316px;top:287.71px;width:48.5px"><span style="transform:scaleX(0.98)">21.01.2015</span></div>
<div class="f" style="left:366px;top:287.71px;width:84.5px"><span style="transform:scaleX(0.94)">prijmeni2755 jmeno27</span></div>
<div class="f" style="left:452px;top:287.71px;width:55.5px"><span style="transform:scaleX(0.97)"></span></div>
<div class="f" style="left:509px;top:287.71px;width:155.5px"><span style="transform:scaleX(0.88)">&nbsp;IČO: DIČ:</span></div>
<div class="f" style="left:666px;top:287.71px;width:98.5px"><span style="transform:scaleX(1.0)">Bc.Eva Moravcová Bratří 1</span></div>
<div class="f" style="left:766px;top:287.71px;width:35.0px"><span style="transform:scaleX(0.97)">Běžnou</span></div>
<div class="f" style="left:63px;top:302.78px;width:57.5px"><span style="transform:scaleX(0.97)">0000003029</span></div>
<div class="f" style="left:123px;top:302.78px;width:49.0px"><span style="transform:scaleX(0.975)">Uspokojen</span></div>
<div class="f" style="left:173.5px;top:302.78px;width:48.5px"><span style="transform:scaleX(0.96)">Uspokojeno</span></div>
<div class="f" style="left:223.5px;top:302.78px;width:34.0px"><span style="transform:scaleX(0.86)">CZE</span></div>
<div class="f" style="left:259px;top:302.78px;width:56.0px"><span style="transform:scaleX(0.81)">MC</span></div>
<div class="f" style="left:316px;top:302.78px;width:48.5px"><span style="transform:scaleX(0.98)">21.01.2015</span></div>
<div class="f" style="left:366px;top:302.78px;width:84.5px"><span style="transform:scaleX(0.94)">prijmeni2755 jmeno27</span></div>
<div class="f" style="left:452px;top:302.78px;width:55.5px"><span style="transform:scaleX(0.97)"></span></div>
<div class="f" style="left:509px;top:302.78px;width:155.5px"><span style="transform:scaleX(0.88)">&nbsp;IČO: DIČ:</span></div>
<div class="f" style="left:666px;top:302.78px;width:98.5px"><span style="transform:scaleX(1.0)">Bc.Eva Moravcová Bratří 1</span></div>
<div class="f" style="left:766px;top:302.78px;width:35.0px"><span style="transform:scaleX(0.97)">Běžnou</span></div>
<div class="f" style="left:63px;top:317.85px;width:57.5px"><span style="transform:scaleX(0.97)">0000003028</span></div>
<div class="f" style="left:123px;top:317.85px;width:49.0px"><span style="transform:scaleX(0.975)">Zrušen</span></div>
<div class="f" style="left:173.5px;top:317.85px;width:48.5px"><span style="transform:scaleX(0.96)">Rozprac.</span></div>
<div class="f" style="left:223.5px;top:317.85px;width:34.0px"><span style="transform:scaleX(0.86)">CZE</span></div>
<div class="f" style="left:259px;top:317.85px;width:56.0px"><span style="transform:scaleX(0.81)">MC</span></div>
<div class="f" style="left:316px;top:317.85px;width:48.5px"><span style="transform:scaleX(0.98)">16.01.2015</span></div>
<div class="f" style="left:366px;top:317.85px;width:84.5px"><span style="transform:scaleX(0.94)">prijmeni2755 jmeno27</span></div>
<div class="f" style="left:452px;top:317.85px;width:55.5px"><span style="transform:scaleX(0.97)"></span></div>
<div class="f" style="left:509px;top:317.85px;width:155.5px"><span style="transform:scaleX(0.96)">Předáno dne 16.01.15 13:01 do prodejní</span></div>
<div class="f" style="left:666px;top:317.85px;width:98.5px"><span style="transform:scaleX(1.0)">&nbsp;Pavel Jičínský Bukovka 6</span></div>
<div class="f" style="left:766px;top:317.85px;width:35.0px"><span style="transform:scaleX(0.97)">Vyzvednutí</span></div>
<div class="f" style="left:63px;top:332.92px;width:57.5px"><span style="transform:scaleX(0.97)">0000003028</span></div>
<div class="f" style="left:123px;top:332.92px;width:49.0px"><span style="transform:scaleX(0.975)">Zrušen</span></div>
<div class="f" style="left:173.5px;top:332.92px;width:48.5px"><span style="transform:scaleX(0.96)">Rozprac.</span></div>
<div class="f" style="left:223.5px;top:332.92px;width:34.0px"><span style="transform:scaleX(0.86)">CZE</span></div>
<div class="f" style="left:259px;top:332.92px;width:56.0px"><span style="transform:scaleX(0.81)">MC</span></div>
<div class="f" style="left:316px;top:332.92px;width:48.5px"><span style="transform:scaleX(0.98)">16.01.2015</span></div>
<div class="f" style="left:366px;top:332.92px;width:84.5px"><span style="transform:scaleX(0.94)">prijmeni2755 jmeno27</span></div>
<div class="f" style="left:452px;top:332.92px;width:55.5px"><span style="transform:scaleX(0.97)"></span></div>
<div class="f" style="left:509px;top:332.92px;width:155.5px"><span style="transform:scaleX(0.96)">Předáno dne 16.01.15 13:01 do prodejní</span></div>
<div class="f" style="left:666px;top:332.92px;width:98.5px"><span style="transform:scaleX(1.0)">&nbsp;Pavel Jičínský Bukovka 6</span></div>
<div class="f" style="left:766px;top:332.92px;width:35.0px"><span style="transform:scaleX(0.97)">Vyzvednutí</span></div>
<div class="f" style="left:63px;top:347.99px;width:57.5px"><span style="transform:scaleX(0.97)">0000003027</span></div>
<div class="f" style="left:123px;top:347.99px;width:49.0px"><span style="transform:scaleX(0.975)">Rozpracová</span></div>
<div class="f" style="left:173.5px;top:347.99px;width:48.5px"><span style="transform:scaleX(0.96)">Rozprac.</span></div>
<div class="f" style="left:223.5px;top:347.99px;width:34.0px"><span style="transform:scaleX(0.86)">CZE</span></div>
<div class="f" style="left:259px;top:347.99px;width:56.0px"><span style="transform:scaleX(0.81)">MC</span></div>
<div class="f" style="left:316px;top:347.99px;width:48.5px"><span style="transform:scaleX(0.98)">15.01.2015</span></div>
<div class="f" style="left:366px;top:347.99px;width:84.5px"><span style="transform:scaleX(0.94)">prijmeni2755 jmeno27</span></div>
<div class="f" style="left:452px;top:347.99px;width:55.5px"><span style="transform:scaleX(0.97)"></span></div>
<div class="f" style="left:509px;top:347.99px;width:155.5px"><span style="transform:scaleX(0.88)">&nbsp;IČO: DIČ:</span></div>
<div class="f" style="left:666px;top:347.99px;width:98.5px"><span style="transform:scaleX(1.0)">Ing.Ivo Holava nám. Míru 1</span></div>
<div class="f" style="left:766px;top:347.99px;width:35.0px"><span style="transform:scaleX(0.97)">Vyzvednutí</span></div>
<div class="f" style="left:63px;top:363.06px;width:57.5px"><span style="transform:scaleX(0.97)">0000003026</span></div>
<div class="f" style="left:123px;top:363.06px;width:49.0px"><span style="transform:scaleX(0.975)">Rozpracová</span></div>
<div class="f" style="left:173.5px;top:363.06px;width:48.5px"><span style="transform:scaleX(0.96)">Rozprac.</span></div>
<div class="f" style="left:223.5px;top:363.06px;width:34.0px"><span style="transform:scaleX(0.86)">CZE</span></div>
<div class="f" style="left:259px;top:363.06px;width:56.0px"><span style="transform:scaleX(0.81)">MC</span></div>
<div class="f" style="left:316px;top:363.06px;width:48.5px"><span style="transform:scaleX(0.98)">15.01.2015</span></div>
<div class="f" style="left:366px;top:363.06px;width:84.5px"><span style="transform:scaleX(0.94)">prijmeni2755 jmeno27</span></div>
<div class="f" style="left:452px;top:363.06px;width:55.5px"><span style="transform:scaleX(0.97)"></span></div>
<div class="f" style="left:509px;top:363.06px;width:155.5px"><span style="transform:scaleX(0.88)">&nbsp;IČO: DIČ:</span></div>
<div class="f" style="left:666px;top:363.06px;width:98.5px"><span style="transform:scaleX(1.0)">Ing.Ivo Holava nám. Míru 1</span></div>
<div class="f" style="left:766px;top:363.06px;width:35.0px"><span style="transform:scaleX(0.97)">Vyzvednutí</span></div>
<div class="f" style="left:63px;top:378.13px;width:57.5px"><span style="transform:scaleX(0.97)">0000003025</span></div>
<div class="f" style="left:123px;top:378.13px;width:49.0px"><span style="transform:scaleX(0.975)">Rozpracová</span></div>
<div class="f" style="left:173.5px;top:378.13px;width:48.5px"><span style="transform:scaleX(0.96)">Rozprac.</span></div>
<div class="f" style="left:223.5px;top:378.13px;width:34.0px"><span style="transform:scaleX(0.86)">CZE</span></div>
<div class="f" style="left:259px;top:378.13px;width:56.0px"><span style="transform:scaleX(0.81)">MC</span></div>
<div class="f" style="left:316px;top:378.13px;width:48.5px"><span style="transform:scaleX(0.98)">15.01.2015</span></div>
<div class="f" style="left:366px;top:378.13px;width:84.5px"><span style="transform:scaleX(0.94)">prijmeni2755 jmeno27</span></div>
<div class="f" style="left:452px;top:378.13px;width:55.5px"><span style="transform:scaleX(0.97)"></span></div>
<div class="f" style="left:509px;top:378.13px;width:155.5px"><span style="transform:scaleX(0.88)">&nbsp;IČO: DIČ:</span></div>
<div class="f" style="left:666px;top:378.13px;width:98.5px"><span style="transform:scaleX(1.0)">Ing.Ivo Holava nám. Míru 1</span></div>
<div class="f" style="left:766px;top:378.13px;width:35.0px"><span style="transform:scaleX(0.97)">Vyzvednutí</span></div>
<div class="f" style="left:63px;top:393.20px;width:57.5px"><span style="transform:scaleX(0.97)">0000003024</span></div>
<div class="f" style="left:123px;top:393.20px;width:49.0px"><span style="transform:scaleX(0.975)">Rozpracová</span></div>
<div class="f" style="left:173.5px;top:393.20px;width:48.5px"><span style="transform:scaleX(0.96)">Rozprac.</span></div>
<div class="f" style="left:223.5px;top:393.20px;width:34.0px"><span style="transform:scaleX(0.86)">CZE</span></div>
<div class="f" style="left:259px;top:393.20px;width:56.0px"><span style="transform:scaleX(0.81)">MC</span></div>
<div class="f" style="left:316px;top:393.20px;width:48.5px"><span style="transform:scaleX(0.98)">15.01.2015</span></div>
<div class="f" style="left:366px;top:393.20px;width:84.5px"><span style="transform:scaleX(0.94)">prijmeni2755 jmeno27</span></div>
<div class="f" style="left:452px;top:393.20px;width:55.5px"><span style="transform:scaleX(0.97)"></span></div>
<div class="f" style="left:509px;top:393.20px;width:155.5px"><span style="transform:scaleX(0.88)">&nbsp;IČO: DIČ:</span></div>
<div class="f" style="left:666px;top:393.20px;width:98.5px"><span style="transform:scaleX(1.0)">Ing.Ivo Holava nám. Míru 1</span></div>
<div class="f" style="left:766px;top:393.20px;width:35.0px"><span style="transform:scaleX(0.97)">Vyzvednutí</span></div>
<div class="f" style="left:63px;top:408.27px;width:57.5px"><span style="transform:scaleX(0.97)">0000003023</span></div>
<div class="f" style="left:123px;top:408.27px;width:49.0px"><span style="transform:scaleX(0.975)">Rozpracová</span></div>
<div class="f" style="left:173.5px;top:408.27px;width:48.5px"><span style="transform:scaleX(0.96)">Rozprac.</span></div>
<div class="f" style="left:223.5px;top:408.27px;width:34.0px"><span style="transform:scaleX(0.86)">CZE</span></div>
<div class="f" style="left:259px;top:408.27px;width:56.0px"><span style="transform:scaleX(0.81)">MC</span></div>
<div class="f" style="left:316px;top:408.27px;width:48.5px"><span style="transform:scaleX(0.98)">15.01.2015</span></div>
<div class="f" style="left:366px;top:408.27px;width:84.5px"><span style="transform:scaleX(0.94)">prijmeni2755 jmeno27</span></div>
<div class="f" style="left:452px;top:408.27px;width:55.5px"><span style="transform:scaleX(0.97)"></span></div>
<div class="f" style="left:509px;top:408.27px;width:155.5px"><span style="transform:scaleX(0.88)">&nbsp;IČO: DIČ:</span></div>
<div class="f" style="left:666px;top:408.27px;width:98.5px"><span style="transform:scaleX(1.0)">Ing.Ivo Holava nám. Míru 1</span></div>
<div class="f" style="left:766px;top:408.27px;width:35.0px"><span style="transform:scaleX(0.97)">Vyzvednutí</span></div>
<div class="f" style="left:63px;top:423.34px;width:57.5px"><span style="transform:scaleX(0.97)">0000003022</span></div>
<div class="f" style="left:123px;top:423.34px;width:49.0px"><span style="transform:scaleX(0.975)">Rozpracová</span></div>
<div class="f" style="left:173.5px;top:423.34px;width:48.5px"><span style="transform:scaleX(0.96)">Rozprac.</span></div>
<div class="f" style="left:223.5px;top:423.34px;width:34.0px"><span style="transform:scaleX(0.86)">CZE</span></div>
<div class="f" style="left:259px;top:423.34px;width:56.0px"><span style="transform:scaleX(0.81)">MC</span></div>
<div class="f" style="left:316px;top:423.34px;width:48.5px"><span style="transform:scaleX(0.98)">15.01.2015</span></div>
<div class="f" style="left:366px;top:423.34px;width:84.5px"><span style="transform:scaleX(0.94)">prijmeni2755 jmeno27</span></div>
<div class="f" style="left:452px;top:423.34px;width:55.5px"><span style="transform:scaleX(0.97)"></span></div>
<div class="f" style="left:509px;top:423.34px;width:155.5px"><span style="transform:scaleX(0.88)">&nbsp;IČO: DIČ:</span></div>
<div class="f" style="left:666px;top:423.34px;width:98.5px"><span style="transform:scaleX(1.0)">Ing.Ivo Holava nám. Míru 1</span></div>
<div class="f" style="left:766px;top:423.34px;width:35.0px"><span style="transform:scaleX(0.97)">Vyzvednutí</span></div>
<div class="f" style="left:63px;top:438.41px;width:57.5px"><span style="transform:scaleX(0.97)">0000003021</span></div>
<div class="f" style="left:123px;top:438.41px;width:49.0px"><span style="transform:scaleX(0.975)">Rozpracová</span></div>
<div class="f" style="left:173.5px;top:438.41px;width:48.5px"><span style="transform:scaleX(0.96)">Rozprac.</span></div>
<div class="f" style="left:223.5px;top:438.41px;width:34.0px"><span style="transform:scaleX(0.86)">CZE</span></div>
<div class="f" style="left:259px;top:438.41px;width:56.0px"><span style="transform:scaleX(0.81)">MC</span></div>
<div class="f" style="left:316px;top:438.41px;width:48.5px"><span style="transform:scaleX(0.98)">15.01.2015</span></div>
<div class="f" style="left:366px;top:438.41px;width:84.5px"><span style="transform:scaleX(0.94)">prijmeni2755 jmeno27</span></div>
<div class="f" style="left:452px;top:438.41px;width:55.5px"><span style="transform:scaleX(0.97)"></span></div>
<div class="f" style="left:509px;top:438.41px;width:155.5px"><span style="transform:scaleX(0.88)">&nbsp;IČO: DIČ:</span></div>
<div class="f" style="left:666px;top:438.41px;width:98.5px"><span style="transform:scaleX(1.0)">Ing.Ivo Holava nám. Míru 1</span></div>
<div class="f" style="left:766px;top:438.41px;width:35.0px"><span style="transform:scaleX(0.97)">Vyzvednutí</span></div>
<div class="f" style="left:63px;top:453.48px;width:57.5px"><span style="transform:scaleX(0.97)">0000003021</span></div>
<div class="f" style="left:123px;top:453.48px;width:49.0px"><span style="transform:scaleX(0.975)">Rozpracová</span></div>
<div class="f" style="left:173.5px;top:453.48px;width:48.5px"><span style="transform:scaleX(0.96)">Rozprac.</span></div>
<div class="f" style="left:223.5px;top:453.48px;width:34.0px"><span style="transform:scaleX(0.86)">CZE</span></div>
<div class="f" style="left:259px;top:453.48px;width:56.0px"><span style="transform:scaleX(0.81)">MC</span></div>
<div class="f" style="left:316px;top:453.48px;width:48.5px"><span style="transform:scaleX(0.98)">15.01.2015</span></div>
<div class="f" style="left:366px;top:453.48px;width:84.5px"><span style="transform:scaleX(0.94)">prijmeni2755 jmeno27</span></div>
<div class="f" style="left:452px;top:453.48px;width:55.5px"><span style="transform:scaleX(0.97)"></span></div>
<div class="f" style="left:509px;top:453.48px;width:155.5px"><span style="transform:scaleX(0.88)">&nbsp;IČO: DIČ:</span></div>
<div class="f" style="left:666px;top:453.48px;width:98.5px"><span style="transform:scaleX(1.0)">Ing.Ivo Holava nám. Míru 1</span></div>
<div class="f" style="left:766px;top:453.48px;width:35.0px"><span style="transform:scaleX(0.97)">Vyzvednutí</span></div>
<div class="f" style="left:63px;top:468.55px;width:57.5px"><span style="transform:scaleX(0.97)">0000003021</span></div>
<div class="f" style="left:123px;top:468.55px;width:49.0px"><span style="transform:scaleX(0.975)">Rozpracová</span></div>
<div class="f" style="left:173.5px;top:468.55px;width:48.5px"><span style="transform:scaleX(0.96)">Rozprac.</span></div>
<div class="f" style="left:223.5px;top:468.55px;width:34.0px"><span style="transform:scaleX(0.86)">CZE</span></div>
<div class="f" style="left:259px;top:468.55px;width:56.0px"><span style="transform:scaleX(0.81)">MC</span></div>
<div class="f" style="left:316px;top:468.55px;width:48.5px"><span style="transform:scaleX(0.98)">15.01.2015</span></div>
<div class="f" style="left:366px;top:468.55px;width:84.5px"><span style="transform:scaleX(0.94)">prijmeni2755 jmeno27</span></div>
<div class="f" style="left:452px;top:468.55px;width:55.5px"><span style="transform:scaleX(0.97)"></span></div>
<div class="f" style="left:509px;top:468.55px;width:155.5px"><span style="transform:scaleX(0.88)">&nbsp;IČO: DIČ:</span></div>
<div class="f" style="left:666px;top:468.55px;width:98.5px"><span style="transform:scaleX(1.0)">Ing.Ivo Holava nám. Míru 1</span></div>
<div class="f" style="left:766px;top:468.55px;width:35.0px"><span style="transform:scaleX(0.97)">Vyzvednutí</span></div>
<div class="f" style="left:63px;top:483.62px;width:57.5px"><span style="transform:scaleX(0.97)">0000003021</span></div>
<div class="f" style="left:123px;top:483.62px;width:49.0px"><span style="transform:scaleX(0.975)">Rozpracová</span></div>
<div class="f" style="left:173.5px;top:483.62px;width:48.5px"><span style="transform:scaleX(0.96)">Rozprac.</span></div>
<div class="f" style="left:223.5px;top:483.62px;width:34.0px"><span style="transform:scaleX(0.86)">CZE</span></div>
<div class="f" style="left:259px;top:483.62px;width:56.0px"><span style="transform:scaleX(0.81)">MC</span></div>
<div class="f" style="left:316px;top:483.62px;width:48.5px"><span style="transform:scaleX(0.98)">15.01.2015</span></div>
<div class="f" style="left:366px;top:483.62px;width:84.5px"><span style="transform:scaleX(0.94)">prijmeni2755 jmeno27</span></div>
<div class="f" style="left:452px;top:483.62px;width:55.5px"><span style="transform:scaleX(0.97)"></span></div>
<div class="f" style="left:509px;top:483.62px;width:155.5px"><span style="transform:scaleX(0.88)">&nbsp;IČO: DIČ:</span></div>
<div class="f" style="left:666px;top:483.62px;width:98.5px"><span style="transform:scaleX(1.0)">Ing.Ivo Holava nám. Míru 1</span></div>
<div class="f" style="left:766px;top:483.62px;width:35.0px"><span style="transform:scaleX(0.97)">Vyzvednutí</span></div>
<div class="f" style="left:63px;top:498.69px;width:57.5px"><span style="transform:scaleX(0.97)">0000003021</span></div>
<div class="f" style="left:123px;top:498.69px;width:49.0px"><span style="transform:scaleX(0.975)">Rozpracová</span></div>
<div class="f" style="left:173.5px;top:498.69px;width:48.5px"><span style="transform:scaleX(0.96)">Rozprac.</span></div>
<div class="f" style="left:223.5px;top:498.69px;width:34.0px"><span style="transform:scaleX(0.86)">CZE</span></div>
<div class="f" style="left:259px;top:498.69px;width:56.0px"><span style="transform:scaleX(0.81)">MC</span></div>
<div class="f" style="left:316px;top:498.69px;width:48.5px"><span style="transform:scaleX(0.98)">15.01.2015</span></div>
<div class="f" style="left:366px;top:498.69px;width:84.5px"><span style="transform:scaleX(0.94)">prijmeni2755 jmeno27</span></div>
<div class="f" style="left:452px;top:498.69px;width:55.5px"><span style="transform:scaleX(0.97)"></span></div>
<div class="f" style="left:509px;top:498.69px;width:155.5px"><span style="transform:scaleX(0.88)">&nbsp;IČO: DIČ:</span></div>
<div class="f" style="left:666px;top:498.69px;width:98.5px"><span style="transform:scaleX(1.0)">Ing.Ivo Holava nám. Míru 1</span></div>
<div class="f" style="left:766px;top:498.69px;width:35.0px"><span style="transform:scaleX(0.97)">Vyzvednutí</span></div>
<div class="f" style="left:63px;top:513.76px;width:57.5px"><span style="transform:scaleX(0.97)">0000003021</span></div>
<div class="f" style="left:123px;top:513.76px;width:49.0px"><span style="transform:scaleX(0.975)">Rozpracová</span></div>
<div class="f" style="left:173.5px;top:513.76px;width:48.5px"><span style="transform:scaleX(0.96)">Rozprac.</span></div>
<div class="f" style="left:223.5px;top:513.76px;width:34.0px"><span style="transform:scaleX(0.86)">CZE</span></div>
<div class="f" style="left:259px;top:513.76px;width:56.0px"><span style="transform:scaleX(0.81)">MC</span></div>
<div class="f" style="left:316px;top:513.76px;width:48.5px"><span style="transform:scaleX(0.98)">15.01.2015</span></div>
<div class="f" style="left:366px;top:513.76px;width:84.5px"><span style="transform:scaleX(0.94)">prijmeni2755 jmeno27</span></div>
<div class="f" style="left:452px;top:513.76px;width:55.5px"><span style="transform:scaleX(0.97)"></span></div>
<div class="f" style="left:509px;top:513.76px;width:155.5px"><span style="transform:scaleX(0.88)">&nbsp;IČO: DIČ:</span></div>
<div class="f" style="left:666px;top:513.76px;width:98.5px"><span style="transform:scaleX(1.0)">Ing.Ivo Holava nám. Míru 1</span></div>
<div class="f" style="left:766px;top:513.76px;width:35.0px"><span style="transform:scaleX(0.97)">Vyzvednutí</span></div>
<div id="redbox"></div><div id="caret"></div>
<div class="arr" style="top:91px;border-radius:5px 5px 1px 1px"><svg width="9" height="9" viewBox="0 0 9 9" style="position:absolute;left:0.5px;top:1px"><path d="M2,6 L4.5,3.3 L7,6 Z" fill="#3a4a80"/></svg></div>
<div style="position:absolute;left:48px;top:103.5px;width:10px;height:7.5px;background:#d4d4d4;border:1px solid #e4e4e4"></div><svg style="position:absolute;left:48px;top:103.5px" width="10" height="8" viewBox="0 0 10 8"><path d="M1.5,7 L9,1" stroke="#fafafa" stroke-width="1"/><path d="M1.5,7 v-2.5 M1.5,7 h2.5" stroke="#fafafa" stroke-width="0.8"/></svg>
<div style="position:absolute;left:48px;top:111px;width:10px;height:1px;background:#8898b0"></div>
<div class="arr" style="top:517px;border-radius:1px 1px 5px 5px"><svg width="9" height="9" viewBox="0 0 9 9" style="position:absolute;left:0.5px;top:1px"><path d="M2,3.2 L4.5,6 L7,3.2 Z" fill="#3a4a80"/></svg></div>
<div id="sbar"></div>
<div id="sbtn"><svg width="9" height="9" viewBox="0 0 9 9" style="position:absolute;left:0;top:0"><path d="M6,1.5 L2.5,4.5 L6,7.5 Z" fill="#2a3a6a"/></svg></div>
<div id="sthumb"></div><div style="position:absolute;left:311.0px;top:533px;width:1.5px;height:1.5px;background:#fafafa"></div><div style="position:absolute;left:317.4px;top:533px;width:1.5px;height:1.5px;background:#fafafa"></div><div style="position:absolute;left:323.8px;top:533px;width:1.5px;height:1.5px;background:#fafafa"></div><div style="position:absolute;left:330.2px;top:533px;width:1.5px;height:1.5px;background:#fafafa"></div><div style="position:absolute;left:336.6px;top:533px;width:1.5px;height:1.5px;background:#fafafa"></div><div style="position:absolute;left:343.0px;top:533px;width:1.5px;height:1.5px;background:#fafafa"></div><div style="position:absolute;left:349.4px;top:533px;width:1.5px;height:1.5px;background:#fafafa"></div><div style="position:absolute;left:308.0px;top:537px;width:1.5px;height:1.5px;background:#fafafa"></div><div style="position:absolute;left:314.4px;top:537px;width:1.5px;height:1.5px;background:#fafafa"></div><div style="position:absolute;left:320.8px;top:537px;width:1.5px;height:1.5px;background:#fafafa"></div><div style="position:absolute;left:327.2px;top:537px;width:1.5px;height:1.5px;background:#fafafa"></div><div style="position:absolute;left:333.6px;top:537px;width:1.5px;height:1.5px;background:#fafafa"></div><div style="position:absolute;left:340.0px;top:537px;width:1.5px;height:1.5px;background:#fafafa"></div><div style="position:absolute;left:346.4px;top:537px;width:1.5px;height:1.5px;background:#fafafa"></div><div style="position:absolute;left:352.8px;top:537px;width:1.5px;height:1.5px;background:#fafafa"></div>
<div id="status">
<div class="t" style="left:4.3px;top:0px">Číslo rezervační objednávky : 3034</div>
<div style="position:absolute;left:4.5px;top:13.8px;width:786px;height:1px;background:#3a4250"></div>
<div class="vs" style="left:782px;top:0;height:14px"></div>
<div class="t" style="left:4.3px;top:14.5px">Záznam: 1/11151</div>
<div class="vs" style="left:107.5px;top:15px;height:12.5px"></div>
<div class="vs" style="left:130px;top:15px;height:12.5px"></div>
<div class="vs" style="left:192.5px;top:15px;height:12.5px"></div>
<div class="vs" style="left:273px;top:15px;height:12.5px"></div>
<div class="vs" style="left:317px;top:15px;height:12.5px"></div>
<div class="t" style="left:177px;top:15px">...</div>
<div class="t" style="left:323px;top:15px">&lt;OSC&gt;</div>
</div>
</body></html>
